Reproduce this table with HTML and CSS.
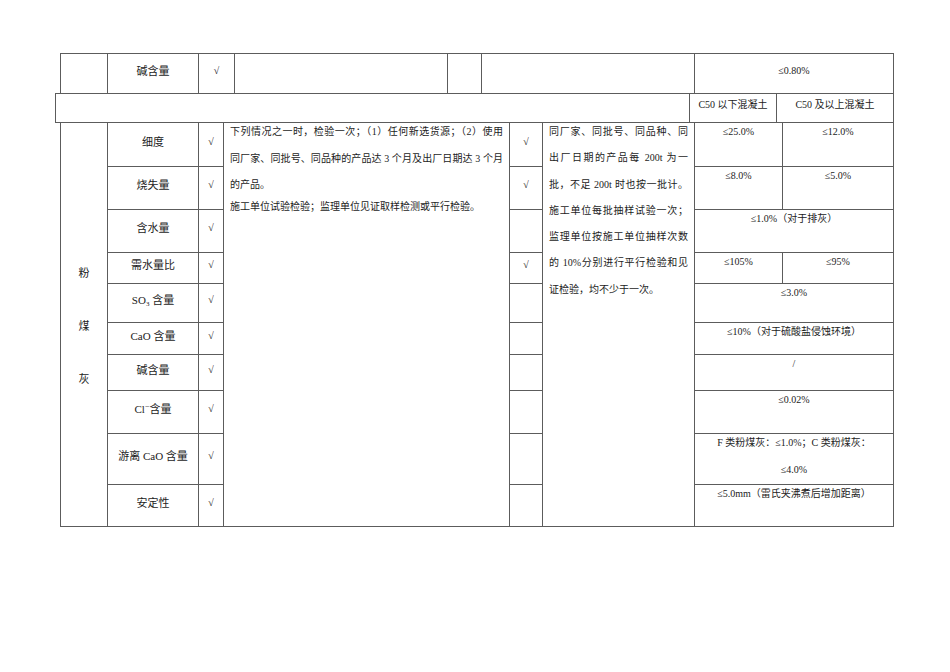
FILE: index.html
```html
<!DOCTYPE html>
<html lang="zh-CN">
<head>
<meta charset="utf-8">
<title>粉煤灰检验</title>
<link rel="stylesheet" href="styles.css">
</head>
<body>
<div class="page">
  <table class="t t1">
    <colgroup>
      <col class="c47"><col class="c91"><col class="c36"><col class="c213"><col class="c34"><col class="c213"><col class="c199">
    </colgroup>
    <tr class="h40">
      <td></td>
      <td class="lab">碱含量</td>
      <td class="lab chk">√</td>
      <td></td>
      <td></td>
      <td></td>
      <td class="mid">≤0.80%</td>
    </tr>
  </table>

  <table class="t t2">
    <colgroup>
      <col class="c634"><col class="c87"><col class="c117">
    </colgroup>
    <tr class="h29">
      <td></td>
      <td class="mid">C50 以下混凝土</td>
      <td class="mid">C50 及以上混凝土</td>
    </tr>
  </table>

  <table class="t t3">
    <colgroup>
      <col class="c47"><col class="c91"><col class="c25"><col class="c286"><col class="c33"><col class="c152"><col class="c88"><col class="c111">
    </colgroup>
    <tr class="h44">
      <td rowspan="10" class="vert"><div class="vtext"><span>粉</span><span>煤</span><span>灰</span></div></td>
      <td class="lab">细度</td>
      <td class="lab chk">√</td>
      <td rowspan="10" class="para">
        <span class="ln j">下列情况之一时，检验一次；（1）任何新选货源；（2）使用</span>
        <span class="ln j">同厂家、同批号、同品种的产品达 3 个月及出厂日期达 3 个月</span>
        <span class="ln short">的产品。</span>
        <span class="ln">施工单位试验检验；监理单位见证取样检测或平行检验。</span>
      </td>
      <td class="lab chk">√</td>
      <td rowspan="10" class="para p6">
        <span class="ln j">同厂家、同批号、同品种、同</span>
        <span class="ln j">出厂日期的产品每 200t 为一</span>
        <span class="ln j">批，不足 200t 时也按一批计。</span>
        <span class="ln j">施工单位每批抽样试验一次；</span>
        <span class="ln j">监理单位按施工单位抽样次数</span>
        <span class="ln j">的 10%分别进行平行检验和见</span>
        <span class="ln">证检验，均不少于一次。</span>
      </td>
      <td class="val">≤25.0%</td>
      <td class="val">≤12.0%</td>
    </tr>
    <tr class="h43">
      <td class="lab">烧失量</td>
      <td class="lab chk">√</td>
      <td class="lab chk">√</td>
      <td class="val">≤8.0%</td>
      <td class="val">≤5.0%</td>
    </tr>
    <tr class="h43">
      <td class="lab">含水量</td>
      <td class="lab chk">√</td>
      <td></td>
      <td class="val" colspan="2">≤1.0%（对于排灰）</td>
    </tr>
    <tr class="h31">
      <td class="lab">需水量比</td>
      <td class="lab chk">√</td>
      <td class="lab chk">√</td>
      <td class="val">≤105%</td>
      <td class="val">≤95%</td>
    </tr>
    <tr class="h39">
      <td class="lab">SO<sub>3</sub> 含量</td>
      <td class="lab chk">√</td>
      <td></td>
      <td class="val" colspan="2">≤3.0%</td>
    </tr>
    <tr class="h32">
      <td class="lab">CaO 含量</td>
      <td class="lab chk">√</td>
      <td></td>
      <td class="val" colspan="2">≤10%（对于硫酸盐侵蚀环境）</td>
    </tr>
    <tr class="h36">
      <td class="lab">碱含量</td>
      <td class="lab chk">√</td>
      <td></td>
      <td class="val" colspan="2">/</td>
    </tr>
    <tr class="h43">
      <td class="lab">Cl<sup>−</sup>含量</td>
      <td class="lab chk">√</td>
      <td></td>
      <td class="val" colspan="2">≤0.02%</td>
    </tr>
    <tr class="h51">
      <td class="lab">游离 CaO 含量</td>
      <td class="lab chk">√</td>
      <td></td>
      <td class="val" colspan="2"><span class="vl">F 类粉煤灰：≤1.0%；C 类粉煤灰：</span><span class="vl">≤4.0%</span></td>
    </tr>
    <tr class="h42">
      <td class="lab">安定性</td>
      <td class="lab chk">√</td>
      <td></td>
      <td class="val" colspan="2">≤5.0mm（雷氏夹沸煮后增加距离）</td>
    </tr>
  </table>
</div>
</body>
</html>
```

FILE: styles.css
```css
html, body {
  margin: 0;
  background: #ffffff;
}

body {
  color: #1c1c1c;
  font-family: "Liberation Serif", "Noto Sans CJK SC", serif;
}

.page {
  padding-top: 53px;
}

.t {
  border-collapse: collapse;
  table-layout: fixed;
}

.t td {
  border: 1px solid #5c5c5c;
  padding: 0;
  font-size: 10px;
  text-align: center;
  vertical-align: top;
}

.t1,
.t3 {
  margin-left: 60px;
  width: 833px;
}

.t2 {
  margin-left: 55px;
  width: 838px;
  margin-top: -1px;
}

.t3 {
  margin-top: -1px;
}

.c25 { width: 25px; }
.c33 { width: 33px; }
.c34 { width: 34px; }
.c36 { width: 36px; }
.c47 { width: 47px; }
.c87 { width: 87px; }
.c88 { width: 88px; }
.c91 { width: 91px; }
.c111 { width: 111px; }
.c117 { width: 117px; }
.c152 { width: 152px; }
.c199 { width: 199px; }
.c213 { width: 213px; }
.c286 { width: 286px; }
.c634 { width: 634px; }

.h29 { height: 29px; }
.h31 { height: 31px; }
.h32 { height: 32px; }
.h36 { height: 36px; }
.h39 { height: 39px; }
.h40 { height: 40px; }
.h42 { height: 42px; }
.h43 { height: 43px; }
.h44 { height: 44px; }
.h51 { height: 51px; }

.t td.lab {
  font-size: 11px;
  vertical-align: middle;
  padding-bottom: 6px;
  line-height: 14px;
}

.t td.chk {
  font-size: 10px;
}

.t td.mid {
  vertical-align: middle;
  padding-bottom: 6px;
  line-height: 14px;
}

.t td.val {
  padding-top: 2px;
  line-height: 14px;
}

.vl {
  display: block;
  line-height: 14px;
}

.vl + .vl {
  margin-top: 13px;
}

.t td.vert {
  vertical-align: middle;
}

.vtext {
  display: flex;
  flex-direction: column;
  align-items: center;
  gap: 41px;
  font-size: 11px;
  line-height: 12px;
  padding-top: 3px;
}

.t td.para {
  text-align: left;
  padding: 0 6px;
  font-size: 10px;
}

.ln {
  display: block;
  height: 26.5px;
  line-height: 18px;
  white-space: nowrap;
}

.ln.j {
  text-align: justify;
  text-align-last: justify;
  white-space: normal;
}

.ln.short {
  height: 22px;
}

.p6 .ln {
  height: 26.3px;
}

sub {
  font-size: 7px;
  vertical-align: -2px;
  line-height: 0;
}

sup {
  font-size: 8px;
  vertical-align: 4px;
  line-height: 0;
}
```
